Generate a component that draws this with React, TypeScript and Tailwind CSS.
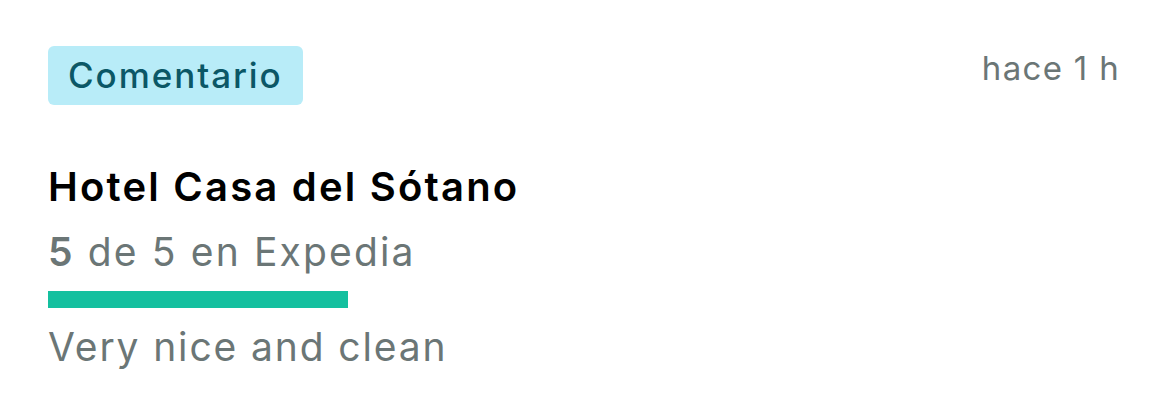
export default function App() {
  return (
    <div className="w-[1170px] h-[413px] bg-white font-['Inter',sans-serif] px-12 pt-[46px]">
      <div className="flex items-start justify-between">
        <span className="rounded-md bg-[#b8ecf8] px-5 h-[59px] flex items-center text-[35px] leading-none font-medium text-[#0b5766] tracking-[0.055em]">
          Comentario
        </span>
        <span className="mt-[6px] mr-[2px] text-[33px] leading-none text-[#6b7676] tracking-[0.04em]">hace 1 h</span>
      </div>
      <div className="mt-[58px] text-[40px] leading-[48px] font-semibold text-black tracking-[0.055em]">
        Hotel Casa del Sótano
      </div>
      <div className="mt-[17px] text-[39px] leading-[48px] text-[#6b7676] tracking-[0.055em]">
        <span className="font-semibold">5</span> de 5 en Expedia
      </div>
      <div className="mt-[15px] h-[17px] w-[300px] bg-[#14c09f]" />
      <div className="mt-[15px] text-[39px] leading-[48px] text-[#6b7676] tracking-[0.048em]">
        Very nice and clean
      </div>
    </div>
  );
}
